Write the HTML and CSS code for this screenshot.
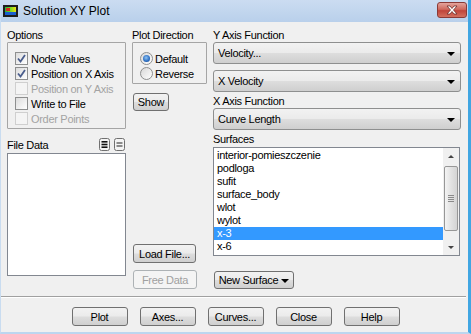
FILE: index.html
```html
<!DOCTYPE html>
<html lang="en">
  <head>
    <title>Solution XY Plot</title>
    <link rel="stylesheet" href="styles.css">
  </head>
  <body>
    <div class="window">
      <div class="titlebar">
        <svg class="app-icon" width="15" height="12" viewBox="0 0 15 12">
          <defs>
            <linearGradient id="ico" x1="0" y1="0" x2="1" y2="0">
              <stop offset="0" stop-color="#1fb83a"/>
              <stop offset="0.6" stop-color="#8fdc1c"/>
              <stop offset="1" stop-color="#f0e21a"/>
            </linearGradient>
          </defs>
          <rect x="0" y="0" width="15" height="12" fill="#1d1d1d"/>
          <rect x="2" y="2" width="11" height="8" fill="url(#ico)"/>
          <rect x="2" y="7" width="11" height="3" fill="#1a5fd0"/>
          <rect x="3" y="3" width="4" height="3" fill="#d72a1e"/>
        </svg>
        <span class="title">Solution XY Plot</span>
        <div class="close-btn">
          <svg width="14" height="10" viewBox="0 0 14 10">
            <path d="M2 1 L5 1 L7 3.5 L9 1 L12 1 L8.5 5 L12 9 L9 9 L7 6.5 L5 9 L2 9 L5.5 5 Z" fill="#fff" stroke="#6b2c28" stroke-width="0.8"/>
          </svg>
        </div>
      </div>

      <div class="content">
        <div class="columns">
          <div class="col col-left">
            <div class="label">Options</div>
            <div class="group options-group">
              <div class="check-row"><span class="check on"></span>Node Values</div>
              <div class="check-row"><span class="check on"></span>Position on X Axis</div>
              <div class="check-row disabled"><span class="check"></span>Position on Y Axis</div>
              <div class="check-row"><span class="check"></span>Write to File</div>
              <div class="check-row disabled"><span class="check"></span>Order Points</div>
            </div>
            <div class="file-head">
              <span>File Data</span>
              <span class="mini-icons">
                <svg width="11" height="13" viewBox="0 0 11 13">
                  <rect x="0.5" y="0.5" width="10" height="12" rx="2" fill="#f4f4f4" stroke="#707070"/>
                  <rect x="2.5" y="3" width="6" height="1.6" fill="#111"/>
                  <rect x="2.5" y="5.7" width="6" height="1.6" fill="#111"/>
                  <rect x="2.5" y="8.4" width="6" height="1.6" fill="#111"/>
                </svg>
                <svg width="11" height="13" viewBox="0 0 11 13">
                  <rect x="0.5" y="0.5" width="10" height="12" rx="2" fill="#f4f4f4" stroke="#707070"/>
                  <rect x="2.5" y="4.5" width="6" height="1" fill="#222"/>
                  <rect x="2.5" y="7.5" width="6" height="1" fill="#222"/>
                </svg>
              </span>
            </div>
            <div class="listbox file-list"></div>
          </div>

          <div class="col col-mid">
            <div class="label">Plot Direction</div>
            <div class="group dir-group">
              <div class="check-row"><span class="radio on"></span>Default</div>
              <div class="check-row"><span class="radio"></span>Reverse</div>
            </div>
            <button class="btn show-btn">Show</button>
            <button class="btn load-btn">Load File...</button>
            <button class="btn free-btn" disabled>Free Data</button>
          </div>

          <div class="col col-right">
            <div class="label">Y Axis Function</div>
            <div class="dropdown">Velocity...</div>
            <div class="dropdown second">X Velocity</div>
            <div class="label label-gap">X Axis Function</div>
            <div class="dropdown">Curve Length</div>
            <div class="label label-surf">Surfaces</div>
            <div class="listbox surface-list">
              <div class="items">
                <div class="item">interior-pomieszczenie</div>
                <div class="item">podloga</div>
                <div class="item">sufit</div>
                <div class="item">surface_body</div>
                <div class="item">wlot</div>
                <div class="item">wylot</div>
                <div class="item selected">x-3</div>
                <div class="item">x-6</div>
              </div>
              <div class="scrollbar">
                <span class="arrow up"></span>
                <span class="thumb"><span class="grip"></span></span>
                <span class="arrow down"></span>
              </div>
            </div>
            <button class="btn new-btn">New Surface<span class="caret"></span></button>
          </div>
        </div>

        <div class="separator"></div>

        <div class="actions">
          <button class="btn action">Plot</button>
          <button class="btn action">Axes...</button>
          <button class="btn action">Curves...</button>
          <button class="btn action">Close</button>
          <button class="btn action">Help</button>
        </div>
      </div>
    </div>
  </body>
</html>
```

FILE: styles.css
```css
body {
  margin: 0;
  font-family: "Liberation Sans", Arial, sans-serif;
  font-size: 11px;
  letter-spacing: -0.3px;
  color: #000;
}

.window {
  width: 471px;
  height: 334px;
  box-sizing: border-box;
  background: #f0f0f0;
  border-left: 1px solid #c9dcf0;
  border-right: 3px solid #41a6e2;
  border-bottom: 2px solid #bcd6ef;
  display: flex;
  flex-direction: column;
}

/* title bar */
.titlebar {
  height: 22px;
  display: flex;
  align-items: center;
  padding-left: 2px;
  background: linear-gradient(#cbdcf1, #b9d0eb);
  flex-shrink: 0;
}

.app-icon {
  display: block;
}

.title {
  margin-left: 5px;
  font-size: 12px;
  letter-spacing: 0;
  flex: 1;
}

.close-btn {
  width: 30px;
  height: 16px;
  margin-right: 1px;
  margin-top: -3px;
  box-sizing: border-box;
  border: 1px solid #8b3a36;
  border-radius: 3px;
  background: linear-gradient(#e4a49c, #cf6a5e 45%, #c0443a 55%, #d3705f);
  display: flex;
  align-items: center;
  justify-content: center;
}

/* main body */
.content {
  flex: 1;
  display: flex;
  flex-direction: column;
  padding: 7px 0 0 6px;
}

.columns {
  display: flex;
  height: 260px;
}

.col {
  display: flex;
  flex-direction: column;
}

.col-left {
  width: 119px;
}

.col-mid {
  width: 75px;
  margin-left: 6px;
}

.col-right {
  width: 248px;
  margin-left: 6px;
}

.label {
  height: 13px;
  line-height: 13px;
}

.label-gap {
  margin-top: 3px;
}

.label-surf {
  margin-top: 3px;
}

.group {
  border: 1px solid #a5a5a5;
  border-radius: 1px;
  padding: 8px 0 2px 7px;
}

.check-row {
  height: 15px;
  display: flex;
  align-items: center;
  white-space: nowrap;
}

.check-row.disabled {
  color: #a3a3a3;
}

.check {
  width: 13px;
  height: 13px;
  box-sizing: border-box;
  border: 1px solid #8e8f8f;
  background: linear-gradient(135deg, #dcdcdc, #ffffff);
  margin-right: 3px;
  flex-shrink: 0;
}

.check.on {
  background: url("data:image/svg+xml,%3Csvg xmlns='http://www.w3.org/2000/svg' width='11' height='11'%3E%3Cpath d='M2 5.5 L4.5 8.5 L9 2' fill='none' stroke='%234a5d8c' stroke-width='1.8'/%3E%3C/svg%3E") center no-repeat, linear-gradient(135deg, #dcdcdc, #ffffff);
}

.disabled .check {
  border-color: #cfcfcf;
  background: #f4f4f4;
}

.radio {
  width: 13px;
  height: 13px;
  box-sizing: border-box;
  border: 1px solid #8e8f8f;
  border-radius: 50%;
  background: linear-gradient(135deg, #d8d8d8, #ffffff);
  margin-right: 2px;
  flex-shrink: 0;
  position: relative;
}

.radio.on::after {
  content: "";
  position: absolute;
  left: 2px;
  top: 2px;
  width: 7px;
  height: 7px;
  border-radius: 50%;
  background: radial-gradient(circle at 45% 40%, #8fc4f4, #2a6cc0 60%, #0f3f80);
}

.dir-group {
  padding-top: 8px;
}

/* buttons */
.btn {
  font: inherit;
  letter-spacing: inherit;
  color: #000;
  box-sizing: border-box;
  border: 1px solid #707070;
  border-radius: 3px;
  background: linear-gradient(#f2f2f2, #ebebeb 48%, #dddddd 52%, #cfcfcf);
  padding: 0;
  display: flex;
  align-items: center;
  justify-content: center;
}

.btn:disabled {
  color: #a0a0a0;
  border-color: #adb2b5;
  background: #f4f4f4;
}

.show-btn {
  width: 36px;
  height: 18px;
  margin-top: 9px;
  margin-left: 1px;
}

.load-btn {
  width: 63px;
  height: 19px;
  margin-top: auto;
  margin-left: 1px;
}

.free-btn {
  width: 64px;
  height: 19px;
  margin-top: 7px;
  margin-left: 1px;
}

.new-btn {
  width: 80px;
  height: 18px;
  margin-top: auto;
  margin-left: 1px;
}

.caret {
  width: 0;
  height: 0;
  border-left: 4px solid transparent;
  border-right: 4px solid transparent;
  border-top: 4px solid #000;
  margin-left: 3px;
  margin-top: 1px;
}

/* dropdowns */
.dropdown {
  height: 22px;
  box-sizing: border-box;
  border: 1px solid #8e8f8f;
  border-radius: 3px;
  background: linear-gradient(#f2f2f2, #ebebeb 48%, #dddddd 52%, #cfcfcf);
  padding-left: 4px;
  line-height: 20px;
  position: relative;
}

.dropdown::after {
  content: "";
  position: absolute;
  right: 5px;
  top: 9px;
  border-left: 4px solid transparent;
  border-right: 4px solid transparent;
  border-top: 4px solid #000;
}

.dropdown.second {
  margin-top: 6px;
}

/* list boxes */
.listbox {
  box-sizing: border-box;
  border: 1px solid #828790;
  background: #fff;
}

.file-head {
  height: 13px;
  margin-top: 9px;
  display: flex;
  align-items: center;
  justify-content: space-between;
  padding-right: 1px;
}

.mini-icons {
  display: flex;
  gap: 4px;
}

.mini-icons svg {
  display: block;
}

.file-list {
  margin-top: 2px;
  height: 123px;
}

.surface-list {
  width: 247px;
  height: 109px;
  margin-top: 1px;
  display: flex;
}

.items {
  flex: 1;
  padding-top: 1px;
}

.item {
  height: 13px;
  line-height: 13px;
  padding-left: 3px;
}

.item.selected {
  background: #3399ff;
  color: #fff;
}

.scrollbar {
  width: 16px;
  background: #f0f0f0;
  display: flex;
  flex-direction: column;
  align-items: center;
}

.arrow {
  width: 0;
  height: 0;
  border-left: 3px solid transparent;
  border-right: 3px solid transparent;
}

.arrow.up {
  border-bottom: 3px solid #444;
  margin-top: 7px;
}

.arrow.down {
  border-top: 3px solid #444;
  margin-top: auto;
  margin-bottom: 6px;
}

.thumb {
  width: 14px;
  height: 65px;
  margin-top: 8px;
  box-sizing: border-box;
  border: 1px solid #979797;
  border-radius: 2px;
  background: linear-gradient(90deg, #f4f4f4, #e2e2e2 50%, #d4d4d4);
  display: flex;
  align-items: center;
  justify-content: center;
}

.grip {
  width: 6px;
  height: 7px;
  background: repeating-linear-gradient(#8a8a8a 0 1px, transparent 1px 2px);
}

/* bottom */
.separator {
  height: 1px;
  background: #a0a0a0;
  border-bottom: 1px solid #fff;
  margin: 7px 2px 0 -6px;
}

.actions {
  display: flex;
  justify-content: center;
  gap: 12px;
  margin: 9px 0 0 -6px;
  padding-left: 2px;
}

.action {
  width: 56px;
  height: 19px;
}
```
